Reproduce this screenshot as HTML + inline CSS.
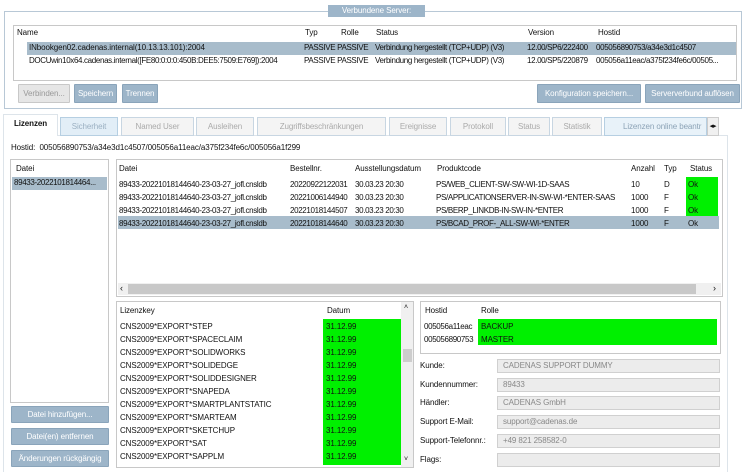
<!DOCTYPE html><html><head><meta charset="utf-8"><style>
*{box-sizing:border-box;margin:0;padding:0}
body{width:750px;height:472px;background:#fff;font-family:"Liberation Sans",sans-serif;font-size:8px;letter-spacing:-0.1px;color:#111;position:relative;overflow:hidden}
div,span{position:absolute;white-space:nowrap}
.b{border:1px solid #c8c8c8}
.btn{background:#9db5c9;color:#fff;text-align:center;line-height:17px;border:1px solid #8aa4ba;border-radius:1px}
.dis{background:#e6e6e6;color:#999;border-color:#c8c8c8}
.tab{height:19px;top:117px;border:1px solid #c8d6e2;background:#f4f4f4;color:#aaa;text-align:center;line-height:18px}
.sel{background:#a8bccb}
.g{background:#00f000}
.in{left:497px;width:223px;height:14px;background:#ececec;border:1px solid #d0d0d0;color:#888;padding-left:5px;line-height:12px}
.lb{left:420px}
.n{letter-spacing:-0.35px}
</style></head><body>
<div class="b" style="left:4px;top:11px;width:738px;height:98px;border-color:#b8c8d6"></div>
<div style="left:328px;top:5px;width:97px;height:12px;background:#9db5c9;color:#fff;text-align:center;line-height:12px">Verbundene Server:</div>
<div class="b" style="left:13px;top:25px;width:724px;height:56px"></div>
<div style="left:17px;top:28px">Name</div><div style="left:305px;top:28px">Typ</div><div style="left:341px;top:28px">Rolle</div><div style="left:376px;top:28px">Status</div><div style="left:528px;top:28px">Version</div><div style="left:598px;top:28px">Hostid</div>
<div class="sel" style="left:27px;top:42px;width:709px;height:13px"></div>
<div style="left:29px;top:43px">INbookgen02.cadenas.internal(10.13.13.101):2004</div>
<div class="n" style="left:29px;top:56px">DOCUwin10x64.cadenas.internal([FE80:0:0:0:450B:DEE5:7509:E769]):2004</div>
<div class="n" style="left:304px;top:43px">PASSIVE&nbsp;PASSIVE</div><div class="n" style="left:304px;top:56px">PASSIVE&nbsp;PASSIVE</div>
<div class="n" style="left:375px;top:43px">Verbindung hergestellt (TCP+UDP) (V3)</div><div class="n" style="left:375px;top:56px">Verbindung hergestellt (TCP+UDP) (V3)</div>
<div class="n" style="left:527px;top:43px">12.00/SP6/222400</div><div class="n" style="left:527px;top:56px">12.00/SP5/220879</div>
<div class="n" style="left:596px;top:43px">005056890753/a34e3d1c4507</div><div class="n" style="left:596px;top:56px">005056a11eac/a375f234fe6c/00505...</div>
<div class="btn dis" style="left:18px;top:84px;width:52px;height:19px">Verbinden...</div>
<div class="btn" style="left:74px;top:84px;width:43px;height:19px">Speichern</div>
<div class="btn" style="left:122px;top:84px;width:36px;height:19px">Trennen</div>
<div class="btn" style="left:537px;top:84px;width:104px;height:19px">Konfiguration speichern...</div>
<div class="btn" style="left:645px;top:84px;width:95px;height:19px">Serververbund auflösen</div>
<div style="left:3px;top:135px;width:725px;height:337px;border:1px solid #dde4ea;border-bottom:none"></div>
<div class="tab" style="left:3px;top:114px;width:55px;height:22px;background:#fff;color:#111;font-weight:bold;border-color:#dde4ea;border-bottom:none">Lizenzen</div>
<div class="tab" style="left:60px;width:58px;background:#e2eef7;color:#9bb0c2;border-color:#b6cfe2">Sicherheit</div>
<div class="tab" style="left:121px;width:73px">Named User</div>
<div class="tab" style="left:196px;width:58px">Ausleihen</div>
<div class="tab" style="left:257px;width:129px">Zugriffsbeschränkungen</div>
<div class="tab" style="left:389px;width:58px">Ereignisse</div>
<div class="tab" style="left:450px;width:56px">Protokoll</div>
<div class="tab" style="left:508px;width:42px">Status</div>
<div class="tab" style="left:552px;width:50px">Statistik</div>
<div class="tab" style="left:604px;width:103px;background:#e8f2f9;color:#8ca3b6;border-color:#b6cfe2;overflow:hidden;text-align:left;padding-left:18px">Lizenzen online beantr</div>
<div style="left:707px;top:117px;width:12px;height:19px;border:1px solid #ccc;background:#f0f0f0;font-size:7px;line-height:17px;text-align:center">◂▸</div>
<div style="left:11px;top:143px">Hostid:&nbsp; 005056890753/a34e3d1c4507/005056a11eac/a375f234fe6c/005056a1f299</div>
<div class="b" style="left:10px;top:159px;width:99px;height:244px"></div>
<div style="left:16px;top:164px">Datei</div>
<div class="sel" style="left:12px;top:177px;width:95px;height:13px"></div>
<div class="n" style="left:14px;top:178px">89433-2022101814464...</div>
<div class="btn" style="left:11px;top:406px;width:98px;height:17px;line-height:15px">Datei hinzufügen...</div>
<div class="btn" style="left:11px;top:428px;width:98px;height:17px;line-height:15px">Datei(en) entfernen</div>
<div class="btn" style="left:11px;top:450px;width:98px;height:17px;line-height:15px">Änderungen rückgängig</div>
<div class="b" style="left:116px;top:159px;width:607px;height:138px"></div>
<div style="left:119px;top:164px">Datei</div><div style="left:290px;top:164px">Bestellnr.</div><div style="left:355px;top:164px">Ausstellungsdatum</div><div style="left:437px;top:164px">Produktcode</div><div style="left:631px;top:164px">Anzahl</div><div style="left:664px;top:164px">Typ</div><div style="left:690px;top:164px">Status</div>
<div class="g" style="left:686px;top:177px;width:32px;height:39px"></div>
<div class="sel" style="left:118px;top:216px;width:601px;height:13px"></div>
<div class="n" style="left:119px;top:178px;line-height:13px">89433-20221018144640-23-03-27_jofl.cnsldb<br>89433-20221018144640-23-03-27_jofl.cnsldb<br>89433-20221018144640-23-03-27_jofl.cnsldb<br>89433-20221018144640-23-03-27_jofl.cnsldb</div>
<div class="n" style="left:290px;top:178px;line-height:13px">20220922122031<br>20221006144940<br>20221018144507<br>20221018144640</div>
<div class="n" style="left:355px;top:178px;line-height:13px">30.03.23 20:30<br>30.03.23 20:30<br>30.03.23 20:30<br>30.03.23 20:30</div>
<div class="n" style="left:436px;top:178px;line-height:13px">PS/WEB_CLIENT-SW-SW-WI-1D-SAAS<br>PS/APPLICATIONSERVER-IN-SW-WI-*ENTER-SAAS<br>PS/BERP_LINKDB-IN-SW-IN-*ENTER<br>PS/BCAD_PROF-_ALL-SW-WI-*ENTER</div>
<div style="left:631px;top:178px;line-height:13px">10<br>1000<br>1000<br>1000</div>
<div style="left:664px;top:178px;line-height:13px">D<br>F<br>F<br>F</div>
<div style="left:688px;top:178px;line-height:13px">Ok<br>Ok<br>Ok<br>Ok</div>
<div style="left:118px;top:283px;width:603px;height:12px;background:#f0f0f0"></div>
<div style="left:128px;top:284px;width:568px;height:10px;background:#c8c8c8"></div>
<div style="left:120px;top:283px;font-size:9px">‹</div><div style="left:713px;top:283px;font-size:9px">›</div>
<div class="b" style="left:116px;top:301px;width:298px;height:167px"></div>
<div style="left:120px;top:306px">Lizenzkey</div><div style="left:327px;top:306px">Datum</div>
<div class="g" style="left:323px;top:319px;width:78px;height:146px"></div>
<div style="left:120px;top:320px;line-height:13px">CNS2009*EXPORT*STEP<br>CNS2009*EXPORT*SPACECLAIM<br>CNS2009*EXPORT*SOLIDWORKS<br>CNS2009*EXPORT*SOLIDEDGE<br>CNS2009*EXPORT*SOLIDDESIGNER<br>CNS2009*EXPORT*SNAPEDA<br>CNS2009*EXPORT*SMARTPLANTSTATIC<br>CNS2009*EXPORT*SMARTEAM<br>CNS2009*EXPORT*SKETCHUP<br>CNS2009*EXPORT*SAT<br>CNS2009*EXPORT*SAPPLM</div>
<div style="left:326px;top:320px;line-height:13px">31.12.99<br>31.12.99<br>31.12.99<br>31.12.99<br>31.12.99<br>31.12.99<br>31.12.99<br>31.12.99<br>31.12.99<br>31.12.99<br>31.12.99</div>
<div style="left:401px;top:302px;width:12px;height:165px;background:#f0f0f0"></div>
<div style="left:403px;top:349px;width:9px;height:13px;background:#cdcdcd"></div>
<div style="left:404px;top:304px;font-size:7px">˄</div><div style="left:404px;top:456px;font-size:7px">˅</div>
<div class="b" style="left:420px;top:301px;width:301px;height:53px"></div>
<div style="left:425px;top:306px">Hostid</div><div style="left:481px;top:306px">Rolle</div>
<div class="g" style="left:478px;top:319px;width:239px;height:26px"></div>
<div class="n" style="left:424px;top:320px;line-height:13px">005056a11eac<br>005056890753</div>
<div style="left:481px;top:320px;line-height:13px">BACKUP<br>MASTER</div>
<div class="lb" style="top:361px">Kunde:</div><div class="in" style="top:359px">CADENAS SUPPORT DUMMY</div>
<div class="lb" style="top:380px">Kundennummer:</div><div class="in" style="top:378px">89433</div>
<div class="lb" style="top:398px">Händler:</div><div class="in" style="top:396px">CADENAS GmbH</div>
<div class="lb" style="top:417px">Support E-Mail:</div><div class="in" style="top:415px">support@cadenas.de</div>
<div class="lb" style="top:436px">Support-Telefonnr.:</div><div class="in" style="top:434px">+49 821 258582-0</div>
<div class="lb" style="top:455px">Flags:</div><div class="in" style="top:453px"></div>
</body></html>
